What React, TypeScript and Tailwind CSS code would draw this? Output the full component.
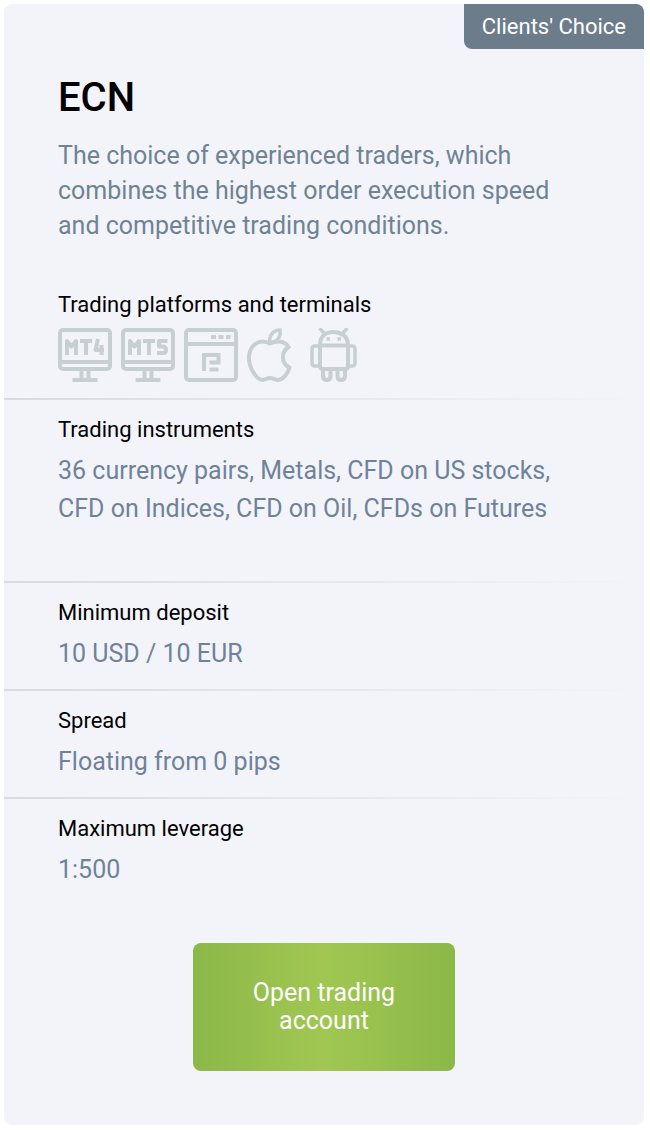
import type { ReactNode } from 'react';

interface Detail {
  label: string;
  value: string;
  tall?: boolean;
}

const details: Detail[] = [
  {
    label: 'Trading instruments',
    value: '36 currency pairs, Metals, CFD on US stocks, CFD on Indices, CFD on Oil, CFDs on Futures',
    tall: true,
  },
  { label: 'Minimum deposit', value: '10 USD / 10 EUR' },
  { label: 'Spread', value: 'Floating from 0 pips' },
  { label: 'Maximum leverage', value: '1:500' },
];

const PlatformIcon = ({ title, children }: { title: string; children: ReactNode }) => (
  <svg
    role="img"
    aria-label={title}
    viewBox="0 0 54 54"
    className="w-[54px] h-[54px] shrink-0"
    fill="none"
    stroke="#c8cfd2"
    strokeWidth="4"
  >
    {children}
  </svg>
);

// Monitor frame shared by both MetaTrader icons
const Monitor = () => (
  <>
    <rect x="2" y="2" width="50" height="39" rx="3" />
    <path d="M2 34H52M23.500 41V52M30.500 41V52M14.500 52H39.500" />
  </>
);

const Mt4Icon = () => (
  <PlatformIcon title="MetaTrader 4">
    <Monitor />
    <path d="M9 27V13L13.500 18.500L18 13V27M22 13H34M28 13V27M40 11L37.500 22H46M43.500 17V27" strokeLinejoin="round" />
  </PlatformIcon>
);

const Mt5Icon = () => (
  <PlatformIcon title="MetaTrader 5">
    <Monitor />
    <path d="M9 27V13L13.500 18.500L18 13V27M22 13H34M28 13V27M46.500 13H38V18.500H42Q45 18.500 45 22Q45 25 42 25H36" strokeLinejoin="round" />
  </PlatformIcon>
);

const WebTerminalIcon = () => (
  <PlatformIcon title="Web terminal">
    <rect x="2" y="2" width="50" height="50" rx="3" />
    <path d="M2 16H52M27 9H32M34.500 9H39.500M42 9H46.500" />
    <path d="M20 43V27H34.500V34.500H25.500M25.500 41.500H34.500" />
  </PlatformIcon>
);

const AppleIcon = () => (
  <PlatformIcon title="iOS">
    <path d="M23 15.500C18 13 12 13 7.500 16.500C1 22 .5 33 4.500 41C7 46 11 52 15.500 52C18.500 52 19.500 50 23 50C26.500 50 28 52 31 52C36.500 52 41 45 42.500 39.500C35 36 33 25 41.500 19C38 13 30.500 12 23 15.500Z" />
    <path d="M23 15C21.500 8 26 2 33 2C34 9 30 14 23 15Z" strokeWidth="3.500" />
  </PlatformIcon>
);

const AndroidIcon = () => (
  <PlatformIcon title="Android">
    <path d="M10 17V38Q10 41 13 41H35Q38 41 38 38V17" />
    <path d="M8.500 17.500H38.500M10 17C10 8 16 4 23.500 4S38 8 38 17" />
    <path d="M9.500 0L14 5M37.500 0L33 5" strokeWidth="3.500" />
    <path d="M10 18H5Q2 18 2 21V35Q2 38 5 38H10M38 18H42Q45 18 45 21V35Q45 38 42 38H38" strokeWidth="3.500" />
    <path d="M13 41V48Q13 52 17 52Q20.500 52 20.500 48V41M27.500 41V48Q27.500 52 31 52Q35 52 35 48V41" />
    <path d="M16.500 11H20M27.500 11H31" strokeWidth="3.500" />
  </PlatformIcon>
);

const Divider = () => <div className="h-0.5 bg-linear-to-r from-[#d9dadf] to-[#f3f4fa]" />;

const DetailRow = ({ label, value, tall }: Detail) => (
  <>
    <Divider />
    <div className="px-[54px] py-4">
      <dt className="text-[22px] leading-7 text-black">{label}</dt>
      <dd className={`mt-2 text-[25px] leading-[38px] text-[#70829a] ${tall ? 'min-h-[113px]' : ''}`}>{value}</dd>
    </div>
  </>
);

export default function App() {
  return (
    <main className="bg-white pt-1 pb-[5px] pl-1 pr-1.5 font-[Roboto,sans-serif]">
      <article className="relative rounded-lg bg-[#f3f4fa] pt-[70px] pb-[54px]">
        <div className="absolute top-0 right-0 rounded-tr-lg rounded-bl-lg bg-[#6c7c8b] px-[18px] pt-[9px] pb-2 text-[22px] leading-7 text-white">
          Clients' Choice
        </div>

        {/* Account name and summary */}
        <div className="px-[54px]">
          <h2 className="text-[40px] leading-12 font-medium text-black">ECN</h2>
          <p className="mt-4 text-[25px] leading-[35px] text-[#708393]">
            The choice of experienced traders, which combines the highest order execution speed and competitive trading
            conditions.
          </p>
        </div>

        {/* Platforms */}
        <div className="mt-12 px-[54px] pb-4">
          <h3 className="text-[22px] leading-7 text-black">Trading platforms and terminals</h3>
          <div className="mt-[9px] flex gap-[9px]">
            <Mt4Icon />
            <Mt5Icon />
            <WebTerminalIcon />
            <AppleIcon />
            <AndroidIcon />
          </div>
        </div>

        <dl>
          {details.map((detail) => (
            <DetailRow key={detail.label} {...detail} />
          ))}
        </dl>

        <div className="mt-[38px] flex justify-center">
          <button
            type="button"
            className="w-[262px] rounded-lg bg-linear-to-r from-[#8bb848] via-[#a1c752] to-[#8bb848] px-10 py-9 text-[25px] leading-7 text-white"
          >
            Open trading account
          </button>
        </div>
      </article>
    </main>
  );
}
